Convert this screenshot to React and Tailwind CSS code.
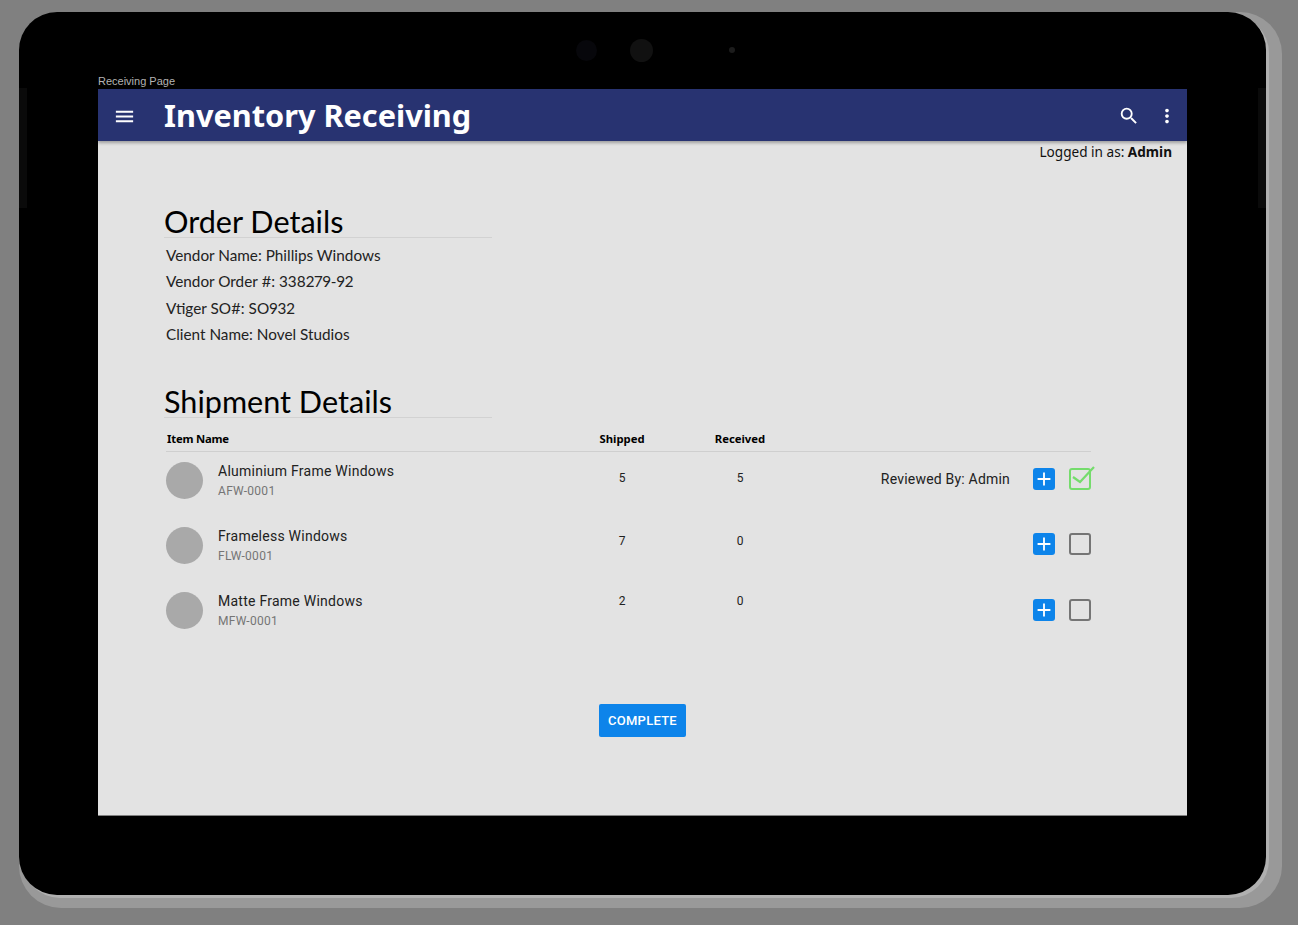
import { MdMenu, MdSearch, MdMoreVert, MdAdd } from "react-icons/md";

const sans = "font-['Noto_Sans','Open_Sans',sans-serif]";
const body = "font-['Lato','Noto_Sans',sans-serif]";
const roboto = "font-['Roboto',sans-serif]";

const items = [
  { name: "Aluminium Frame Windows", sku: "AFW-0001", shipped: 5, received: 5, reviewed: true, numPad: "pb-[6px]", ctrlPad: "pb-[4px]" },
  { name: "Frameless Windows", sku: "FLW-0001", shipped: 7, received: 0, numPad: "pb-[10px]", ctrlPad: "pb-[4px]" },
  { name: "Matte Frame Windows", sku: "MFW-0001", shipped: 2, received: 0, numPad: "pb-[20px]", ctrlPad: "pb-[2px]" },
];

const orderLines = [
  "Vendor Name: Phillips Windows",
  "Vendor Order #: 338279-92",
  "Vtiger SO#: SO932",
  "Client Name: Novel Studios",
];

const SectionTitle = ({ children }) => (
  <div className="w-[328px] border-b border-[#d2d2d2] h-[32px]">
    <h2 className={`${body} text-[30.6px] leading-[32px] text-black whitespace-nowrap`}>{children}</h2>
  </div>
);

const ItemRow = ({ item }) => (
  <div className="flex items-center h-[57px] mb-[8px]">
    <div className="w-[37px] h-[37px] rounded-full bg-[#a9a9a9] shrink-0" />
    <div className={`${roboto} ml-[15px] w-[345px]`}>
      <div className="text-[14px] leading-[20px] text-[#212121] tracking-[0.25px]">{item.name}</div>
      <div className="text-[12px] leading-[18px] mt-[1px] text-[#757575] tracking-[0.3px]">{item.sku}</div>
    </div>
    <div className={`${roboto} ${item.numPad} w-[118px] text-center text-[12px] text-[#212121]`}>{item.shipped}</div>
    <div className={`${roboto} ${item.numPad} w-[118px] text-center text-[12px] text-[#212121]`}>{item.received}</div>
    <div className={`${roboto} flex-1 pb-[2px] text-right pr-[23px] text-[14px] text-[#212121] tracking-[0.2px]`}>
      {item.reviewed ? "Reviewed By: Admin" : ""}
    </div>
    <div className={`${item.ctrlPad} flex items-center`}>
      <div className="w-[22px] h-[22px] rounded-[3px] bg-[#0d84ea] flex items-center justify-center text-white">
        <MdAdd size={22} />
      </div>
      <div className={`relative ml-[14px] w-[22px] h-[22px] rounded-[3px] border-[2.5px] ${item.reviewed ? "border-[#75dc6c]" : "border-[#757575]"}`}>
        {item.reviewed && (
          <svg className="absolute -left-[2.5px] -top-[3.5px]" width="27" height="25" viewBox="0 0 27 25" fill="none">
            <path d="M4 11L11 16L25 1" stroke="#75dc6c" strokeWidth="2.2" />
          </svg>
        )}
      </div>
    </div>
  </div>
);

export default function App() {
  return (
    <div className="w-[1298px] h-[925px] bg-[#808080] pt-[12px] pl-[19px] overflow-hidden">
      {/* device edge, sits behind the black body */}
      <div className="w-[1263px] h-[896px] rounded-[42px] bg-[#999999]">
        <div className="relative w-[1247px] h-[883px] rounded-[38px] bg-black shadow-[3px_3px_0_#b0b0b0]">
          {/* side buttons */}
          <div className="absolute left-0 top-[76px] w-[8px] h-[120px] bg-[#0a0a0a]" />
          <div className="absolute right-0 top-[76px] w-[8px] h-[120px] bg-[#0a0a0a]" />

          <div className="px-[79px] h-[77px] flex flex-col">
            {/* cameras */}
            <div className="flex items-center pt-[13px] h-[63px]">
              <div className="ml-[478px] w-[21px] h-[21px] rounded-full bg-[#07070b]" />
              <div className="ml-[33px] w-[23px] h-[23px] rounded-full bg-[#111111]" />
              <div className="ml-[76px] w-[6px] h-[6px] rounded-full bg-[#1c1c1c]" />
            </div>
            <div className="font-['Liberation_Sans',sans-serif] text-[11px] leading-[12px] text-[#b4b4b4]">Receiving Page</div>
          </div>

          <div className="mx-[79px] w-[1089px] h-[727px] bg-[#e3e3e3] border-b border-[#808080]">
            <header className="h-[52px] bg-[#283371] shadow-[0_2px_3px_rgba(0,0,0,0.3)] flex items-center text-white relative">
              <div className="w-[66px] pl-[15px] pt-[2px]">
                <MdMenu size={23} />
              </div>
              <h1 className={`${sans} text-[30.7px] pt-[1px] font-bold leading-none whitespace-nowrap`}>Inventory Receiving</h1>
              <div className="ml-auto flex items-center pr-[9px] pt-[2px] gap-[16px]">
                <MdSearch size={22} />
                <MdMoreVert size={22} />
              </div>
            </header>

            <div className={`${sans} text-right pr-[15px] text-[13.6px] leading-[22px] text-[#111]`}>
              Logged in as: <span className="font-bold">Admin</span>
            </div>

            <div className="pl-[66px] pt-[43px]">
              <SectionTitle>Order Details</SectionTitle>
              <div className={`${body} proportional-nums pl-[2px] mt-[4px] text-[15.3px] leading-[26.3px] text-[#222]`}>
                {orderLines.map((line) => (
                  <div key={line}>{line}</div>
                ))}
              </div>

              <div className="mt-[39px]">
                <SectionTitle>Shipment Details</SectionTitle>
              </div>

              <div className="w-[925px] ml-[2px] mt-[11px]">
                <div className={`${sans} flex items-center h-[23px] pb-[2px] border-b border-[#cfcfcf] text-[11.3px] font-bold text-black`}>
                  <div className="pl-[1px] w-[400px] tracking-[-0.2px]">Item Name</div>
                  <div className="w-[112px] text-center">Shipped</div>
                  <div className="w-[124px] text-center">Received</div>
                </div>
                {items.map((item) => (
                  <ItemRow key={item.sku} item={item} />
                ))}
              </div>

              <div className="w-[957px] flex justify-center mt-[65px]">
                <button className={`${roboto} w-[87px] h-[33px] bg-[#0d84ea] rounded-[2px] text-white font-medium text-[13px] tracking-[0.25px]`}>
                  COMPLETE
                </button>
              </div>
            </div>
          </div>
        </div>
      </div>
    </div>
  );
}
